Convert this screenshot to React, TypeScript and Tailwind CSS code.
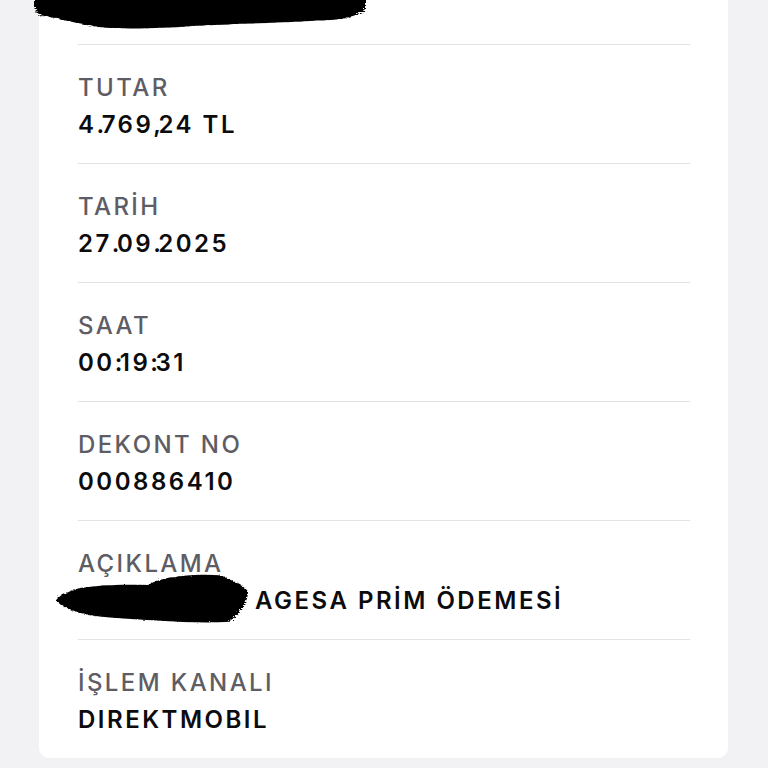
import React from "react";

const rows = [
  { label: "TUTAR", value: "4.769,24 TL" },
  { label: "TARİH", value: "27.09.2025" },
  { label: "SAAT", value: "00:19:31" },
  { label: "DEKONT NO", value: "000886410" },
  { label: "AÇIKLAMA", value: "AGESA PRİM ÖDEMESİ", redacted: true },
  { label: "İŞLEM KANALI", value: "DIREKTMOBIL" },
];

// punctuation in the source font is much narrower than in Inter, so tighten it
const tight = (text: string) =>
  text.split("").map((ch, i) =>
    /[.,:]/.test(ch) ? (
      <span key={i} className="tracking-[-2.5px]">
        {ch}
      </span>
    ) : (
      ch
    )
  );

const Scribble = ({ className, d, id }: { className: string; d: string; id: string }) => (
  <svg className={className} viewBox="0 0 100 100" preserveAspectRatio="none">
    <defs>
      <filter id={id} x="-10%" y="-20%" width="120%" height="140%">
        <feTurbulence type="fractalNoise" baseFrequency="0.6" numOctaves="3" result="n" />
        <feDisplacementMap in="SourceGraphic" in2="n" scale="4" />
      </filter>
    </defs>
    <path d={d} fill="#000" filter={`url(#${id})`} />
  </svg>
);

export default function App() {
  return (
    <div
      className="min-h-[768px] w-[768px] bg-[#f2f2f5] overflow-hidden"
      style={{ fontFamily: "Inter, 'Noto Sans', sans-serif" }}
    >
      <div className="relative ml-[39px] w-[689px] bg-white rounded-b-[10px] pl-[39px] pr-[38px]">
        <Scribble
          id="r1"
          className="absolute left-[-5px] top-0 w-[332px] h-[31px]"
          d="M0 0 L100 0 L100 30 C98 45 96 55 92 62 C80 72 60 76 45 86 C35 92 25 94 20 88 C14 80 8 60 2 50 C1 40 0 30 0 20 Z"
        />
        <div className="h-[44px]" />
        {rows.map((r) => (
          <div key={r.label} className="border-t border-[#e3e3e6] h-[119px] pt-[29px]">
            <div className="text-[24px] leading-[28px] font-medium tracking-[2.4px] text-[#5e5d65]">
              {r.label}
            </div>
            <div className="relative mt-[9px] text-[24px] leading-[28px] font-semibold tracking-[2.5px] text-[#0c0c0e]">
              {r.redacted && (
                <>
                  <span className="inline-block w-[177px]" />
                  <Scribble
                    id="r2"
                    className="absolute left-[-22px] top-[-17px] w-[192px] h-[54px]"
                    d="M8 38 C14 30 30 26 48 28 C54 14 70 6 86 10 C92 20 98 28 100 40 C100 60 96 80 90 96 C72 100 45 92 28 88 C12 84 3 70 0 56 C2 47 5 42 8 38 Z"
                  />
                </>
              )}
              {tight(r.value)}
            </div>
          </div>
        ))}
      </div>
    </div>
  );
}
